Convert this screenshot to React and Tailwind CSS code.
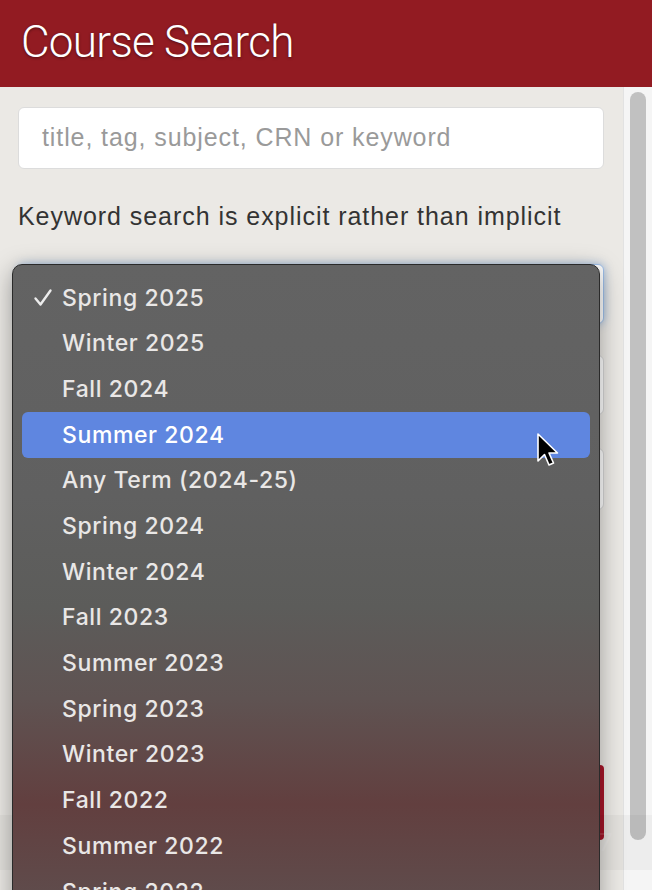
import React from "react";

const terms = [
  "Spring 2025",
  "Winter 2025",
  "Fall 2024",
  "Summer 2024",
  "Any Term (2024-25)",
  "Spring 2024",
  "Winter 2024",
  "Fall 2023",
  "Summer 2023",
  "Spring 2023",
  "Winter 2023",
  "Fall 2022",
  "Summer 2022",
  "Spring 2022",
];

function Check() {
  return (
    <svg width="20" height="20" viewBox="0 0 20 20" className="absolute left-[11px] top-[13px]">
      <path d="M2.5 10.5 L7.5 16.5 L17.5 2.5" fill="none" stroke="#ececec" strokeWidth="2.4" strokeLinecap="round" strokeLinejoin="round" />
    </svg>
  );
}

function Pointer() {
  return (
    <svg width="24" height="38" viewBox="0 0 24 38" className="absolute left-[536px] top-[432px]">
      <path
        d="M2 2 L2 29 L8.5 22.5 L13 33 L17.5 31 L13 21 L21.5 21 Z"
        fill="#000"
        stroke="#fff"
        strokeWidth="1.6"
        strokeLinejoin="round"
      />
    </svg>
  );
}

function TermMenu() {
  return (
    <div className="absolute left-[12px] top-[264px] w-[588px] h-[660px] rounded-[10px] border border-[#2a2a2a] bg-[linear-gradient(180deg,#636363_0%,#606060_35%,#5c5c5a_52%,#5f5352_66%,#623f3f_82%,#604848_92%,#5e5050_100%)] shadow-[0_6px_24px_rgba(0,0,0,0.35)] pt-[10px] px-[9px]">
      {terms.map((t, i) => (
        <div
          key={t}
          className={`relative h-[45.7px] flex items-center pl-[40px] rounded-[6px] text-[23px] font-medium tracking-[0.6px] ${
            i === 3 ? "bg-[#5f86e0] text-white" : "text-[#e9e7e6]"
          }`}
        >
          {i === 0 && <Check />}
          {t}
        </div>
      ))}
    </div>
  );
}

export default function App() {
  return (
    <div className="relative w-[652px] h-[890px] overflow-hidden flex flex-col bg-[#ebe9e5] font-['Inter',sans-serif]">
      <header className="h-[87px] shrink-0 bg-[#921b22] flex items-center px-[21px] pb-[3px]">
        <h1 className="text-white text-[44px] font-light tracking-[-0.7px] font-['Roboto',sans-serif] [text-shadow:0_1px_3px_rgba(0,0,0,0.45)]">
          Course Search
        </h1>
      </header>
      <div className="flex flex-1">
        <div className="w-[623px] flex flex-col px-[18px] pt-[20px] pr-[19px] font-['Liberation_Sans',sans-serif]">
          <div className="h-[62px] rounded-[6px] border border-[#dcdcdc] bg-white flex items-center px-[23px] text-[25px] tracking-[0.9px] text-[#9a9a9a]">
            title, tag, subject, CRN or keyword
          </div>
          <p className="mt-[32px] text-[25px] leading-[30px] tracking-[0.95px] text-[#333]">
            Keyword search is explicit rather than implicit
          </p>
          <div className="mt-[33px] h-[60px] rounded-[6px] border border-[#9fc0ea] bg-white shadow-[0_0_8px_rgba(80,140,220,0.5)]" />
          <div className="mt-[31px] h-[60px] rounded-[6px] border border-[#d6d6d6] bg-white" />
          <div className="mt-[33px] h-[62px] rounded-[6px] border border-[#d6d6d6] bg-white" />
          <div className="mt-[255px] h-[75px] rounded-[4px] bg-[#a8162a]" />
        </div>
        <div className="w-[29px] bg-[#f5f5f5] border-l border-[#e2e2e2] pt-[5px] flex justify-center">
          <div className="w-[16px] h-[748px] rounded-full bg-[#c1c1c1]" />
        </div>
      </div>

      <div className="absolute left-0 top-[815px] w-[652px] h-[55px] bg-black/[0.03] flex items-center px-[30px] gap-4">
        <div className="flex-1 relative h-[2px] bg-white/10">
          <div className="absolute left-[290px] -top-[14px] w-[4px] h-[30px] rounded bg-white/15" />
        </div>
        <span className="text-[24px] text-white/15 w-[70px]">00:17</span>
      </div>

      <TermMenu />
      <Pointer />
    </div>
  );
}
